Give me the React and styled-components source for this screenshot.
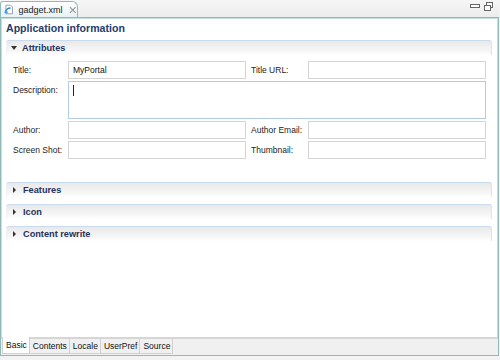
import styled, { createGlobalStyle } from "styled-components";

const Global = createGlobalStyle`
  html, body { margin: 0; padding: 0; background: #f3f3f3; }
  body { font-family: "Liberation Sans", Arial, sans-serif; font-size: 8.5px; }
`;

const Shell = styled.div`
  width: 500px;
  height: 360px;
  display: flex;
  flex-direction: column;
  background: #f3f3f3;
  box-sizing: border-box;
  padding-right: 1px;
`;

const TopStrip = styled.div`
  height: 17px;
  display: flex;
  align-items: flex-end;
  justify-content: space-between;
  background: linear-gradient(#f6f6f6, #ececec);
`;

const EditorTab = styled.div`
  height: 16px;
  width: 78px;
  box-sizing: border-box;
  display: flex;
  align-items: center;
  gap: 4px;
  padding-left: 3px;
  border: 1px solid #8fbaba;
  border-bottom: none;
  border-radius: 3px 6px 0 0;
  background: linear-gradient(#ffffff, #e9f1f2);
  font-size: 9px;
  color: #222;
`;

const WinButtons = styled.div`
  display: flex;
  gap: 4px;
  padding: 0 6px 6px 0;
`;

const Frame = styled.div`
  flex: 1;
  display: flex;
  flex-direction: column;
  border: 1px solid #8fbaba;
  box-shadow: inset 0 0 0 1px #c5dede;
  background: #fff;
  margin-bottom: 4px;
  overflow: hidden;
`;

const Body = styled.div`
  flex: 1;
  padding: 2px 5px 0 5px;
  display: flex;
  flex-direction: column;
`;

const PageTitle = styled.div`
  font-weight: bold;
  font-size: 10.6px;
  color: #1f3c6e;
  height: 20px;
  line-height: 16px;
`;

const Section = styled.div`
  margin-top: ${(p) => p.$top || 0}px;
  margin-right: 1px;
`;

const SectionHead = styled.div`
  height: 14px;
  display: flex;
  align-items: center;
  gap: 5px;
  padding-left: 5px;
  border-top: 1px solid #c9dbee;
  border-radius: 3px 3px 0 0;
  background: linear-gradient(#e9e9e9, #f6f6f6 70%, #ffffff);
  box-shadow: inset -1px 0 0 #e2e2e2, inset 1px 0 0 #eef3f8;
  font-weight: bold;
  font-size: 9.2px;
  color: #26335e;
`;

const Twisty = styled.span`
  width: 0;
  height: 0;
  border-style: solid;
  ${(p) =>
    p.$open
      ? "border-width: 4px 3px 0 3px; border-color: #333 transparent transparent transparent;"
      : "border-width: 3px 0 3px 3px; border-color: transparent transparent transparent #333; margin-left: 2px; margin-right: 2px;"}
`;

const Form = styled.div`
  display: grid;
  grid-template-columns: 55px 178px 62px 178px;
  row-gap: 2px;
  padding: 6px 0 0 7px;
  height: 122px;
  align-content: start;
  box-sizing: border-box;
`;

const Label = styled.div`
  color: #222;
  padding-left: ${(p) => (p.$second ? 5 : 0)}px;
  padding-top: 4px;
  white-space: nowrap;
`;

const Field = styled.div`
  height: 18px;
  box-sizing: border-box;
  border: 1px solid ${(p) => (p.$focus ? "#b3cbe3" : "#d4d4d4")};
  background: #fff;
  color: #111;
  padding: 3px 0 0 4px;
  grid-column: ${(p) => p.$span || "auto"};
  ${(p) => p.$tall && "height: 38px;"}
`;

const Caret = styled.span`
  display: inline-block;
  width: 1px;
  height: 11px;
  background: #222;
`;

const BottomBar = styled.div`
  height: 16px;
  display: flex;
  align-items: flex-start;
  background: #f0f0f0;
  border-top: 2px solid #d6d6d6;
  padding-left: 2px;
`;

const PageTab = styled.div`
  box-sizing: border-box;
  padding: 0 2px 0 3px;
  display: flex;
  align-items: center;
  color: #111;
  border: 1px solid #d0d0d0;
  border-top: none;
  margin-left: -1px;
  background: ${(p) => (p.$active ? "#fff" : "#f0f0f0")};
  margin-top: ${(p) => (p.$active ? -2 : 0)}px;
  height: ${(p) => (p.$active ? 17 : 15)}px;
`;

const XmlIcon = () => (
  <svg width="11" height="11" viewBox="0 0 11 11">
    <path d="M2 1h5l2 2v7H2z" fill="#fff" stroke="#7a8aa0" strokeWidth="0.8" />
    <path d="M1 9c1-3 3-5 6-5" stroke="#2b8ad8" strokeWidth="1.6" fill="none" />
    <circle cx="2.5" cy="8.5" r="1.4" fill="#4aa3e8" />
  </svg>
);

const CloseX = () => (
  <svg width="8" height="8" viewBox="0 0 8 8" style={{ marginLeft: 3 }}>
    <path d="M1 1l6 6M7 1L1 7" stroke="#9a9a9a" strokeWidth="1.3" />
  </svg>
);

const MinIcon = () => (
  <svg width="10" height="8" viewBox="0 0 10 8">
    <rect x="0.5" y="2.5" width="9" height="3" fill="#fff" stroke="#666" />
  </svg>
);

const RestoreIcon = () => (
  <svg width="9" height="9" viewBox="0 0 9 9">
    <rect x="2.5" y="0.5" width="6" height="5" fill="#fff" stroke="#666" />
    <rect x="0.5" y="3.5" width="6" height="5" fill="#fff" stroke="#666" />
  </svg>
);

const collapsed = ["Features", "Icon", "Content rewrite"];

export default function App() {
  return (
    <Shell>
      <Global />
      <TopStrip>
        <EditorTab>
          <XmlIcon />
          gadget.xml
          <CloseX />
        </EditorTab>
        <WinButtons>
          <MinIcon />
          <RestoreIcon />
        </WinButtons>
      </TopStrip>
      <Frame>
        <Body>
          <PageTitle>Application information</PageTitle>
          <Section>
            <SectionHead>
              <Twisty $open />
              Attributes
            </SectionHead>
            <Form>
              <Label>Title:</Label>
              <Field>MyPortal</Field>
              <Label $second>Title URL:</Label>
              <Field />
              <Label>Description:</Label>
              <Field $span="2 / 5" $tall $focus>
                <Caret />
              </Field>
              <Label>Author:</Label>
              <Field />
              <Label $second>Author Email:</Label>
              <Field />
              <Label>Screen Shot:</Label>
              <Field />
              <Label $second>Thumbnail:</Label>
              <Field />
            </Form>
          </Section>
          {collapsed.map((name, i) => (
            <Section key={name} $top={i === 0 ? 5 : 7}>
              <SectionHead>
                <Twisty />
                {name}
              </SectionHead>
            </Section>
          ))}
        </Body>
        <BottomBar>
          <PageTab $active>Basic</PageTab>
          <PageTab>Contents</PageTab>
          <PageTab>Locale</PageTab>
          <PageTab>UserPref</PageTab>
          <PageTab>Source</PageTab>
        </BottomBar>
      </Frame>
    </Shell>
  );
}
